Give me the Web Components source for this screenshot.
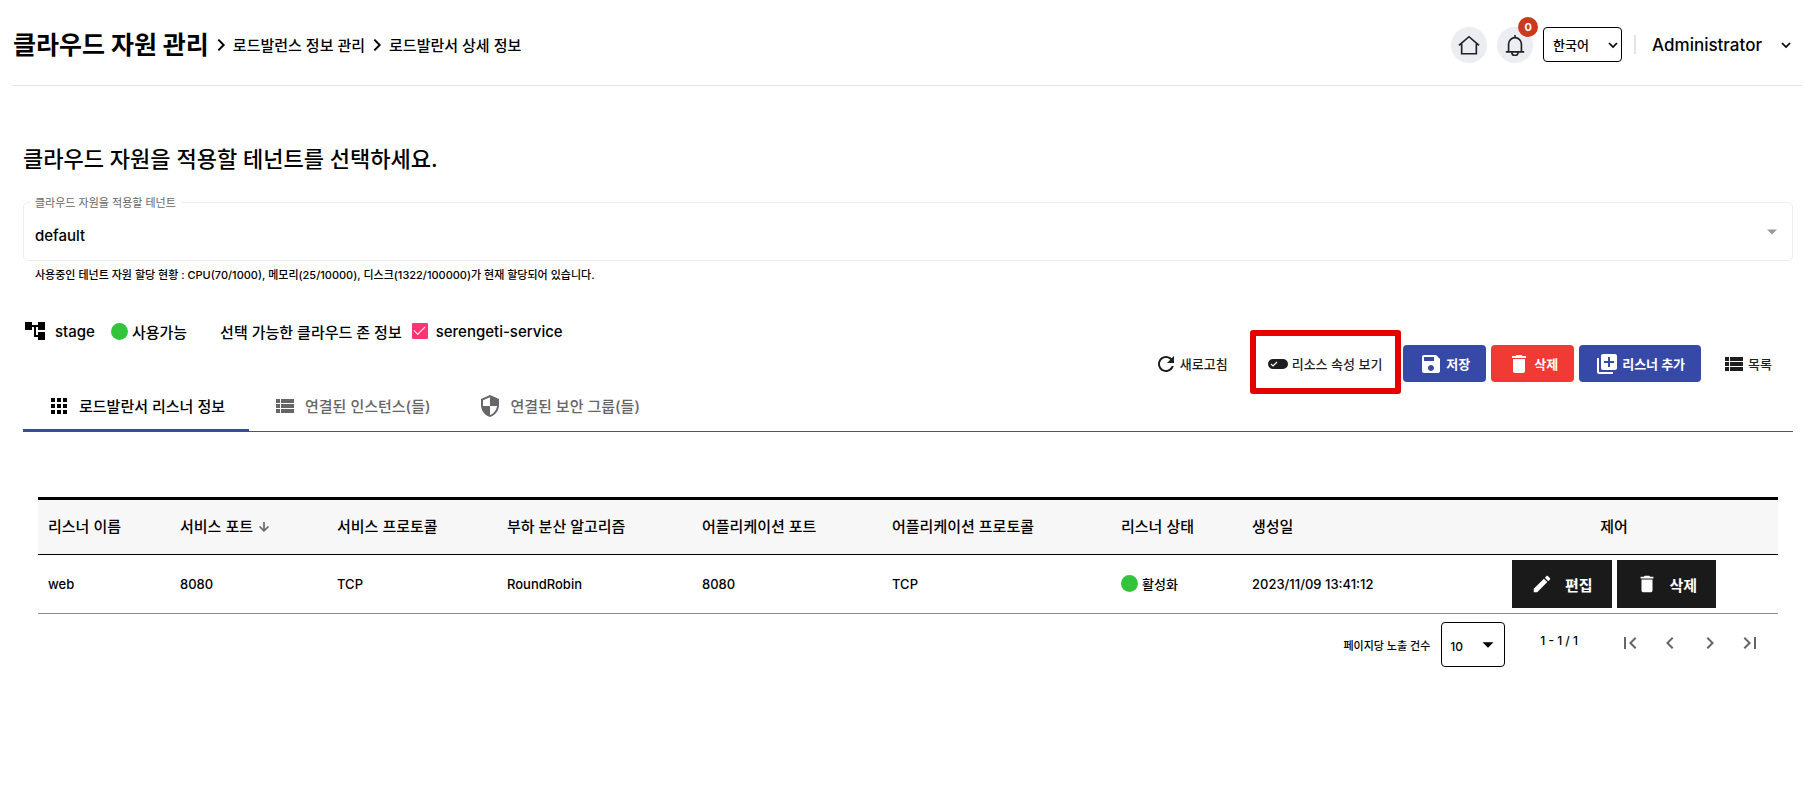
<!DOCTYPE html>
<html lang="ko">
<head>
<meta charset="utf-8">
<title>클라우드 자원 관리</title>
<style>
body {
    margin: 0;
    background: #fff;
    color: #000;
    font-family: Inter, "Noto Sans CJK KR", sans-serif;
    font-size: 15px;
    font-weight: 500;
}
</style>
</head>
<body>
<cloud-console></cloud-console>

<script>
const ICONS = {
    tree: '<path d="M22 11V3h-7v3H9V3H2v8h7V8h2v10h4v3h7v-8h-7v3h-2V8h2v3z"/>',
    refresh: '<path d="M17.65 6.35C16.2 4.9 14.21 4 12 4c-4.42 0-7.99 3.58-7.99 8s3.57 8 7.99 8c3.73 0 6.84-2.55 7.73-6h-2.08c-.82 2.33-3.04 4-5.65 4-3.31 0-6-2.69-6-6s2.69-6 6-6c1.66 0 3.14.69 4.22 1.78L13 11h7V4l-2.35 2.35z"/>',
    toggle: '<rect x="2" y="7" width="20" height="10" rx="5"/><path d="M5 12l2 2 4-4" fill="none" stroke="#fff" stroke-width="1.200"/>',
    save: '<path d="M17 3H5c-1.110 0-2 .9-2 2v14c0 1.100.89 2 2 2h14c1.100 0 2-.9 2-2V7l-4-4zm-5 16c-1.660 0-3-1.340-3-3s1.340-3 3-3 3 1.340 3 3-1.340 3-3 3zm3-10H5V5h10v4z"/>',
    trash: '<path d="M6 19c0 1.100.9 2 2 2h8c1.100 0 2-.9 2-2V7H6v12zM19 4h-3.500l-1-1h-5l-1 1H5v2h14V4z"/>',
    queue: '<path d="M4 6H2v14c0 1.100.9 2 2 2h14v-2H4V6zm16-4H8c-1.100 0-2 .9-2 2v12c0 1.100.9 2 2 2h12c1.100 0 2-.9 2-2V4c0-1.100-.9-2-2-2zm-1 9h-4v4h-2v-4H9V9h4V5h2v4h4v2z"/>',
    list: '<path d="M3 14h4v-4H3v4zm0 5h4v-4H3v4zM3 9h4V5H3v4zm5 5h13v-4H8v4zm0 5h13v-4H8v4zM8 5v4h13V5H8z"/>',
    apps: '<path d="M4 8h4V4H4v4zm6 12h4v-4h-4v4zm-6 0h4v-4H4v4zm0-6h4v-4H4v4zm6 0h4v-4h-4v4zm6-10v4h4V4h-4zm-6 4h4V4h-4v4zm6 6h4v-4h-4v4zm0 6h4v-4h-4v4z"/>',
    shield: '<path d="M12 1L3 5v6c0 5.550 3.840 10.740 9 12 5.160-1.260 9-6.450 9-12V5l-9-4zm0 10.990h7c-.53 4.120-3.280 7.790-7 8.940V12H5V6.300l7-3.110v8.800z"/>',
    edit: '<path d="M3 17.250V21h3.750L17.810 9.940l-3.750-3.750L3 17.250zM20.710 7.040c.39-.39.39-1.020 0-1.410l-2.340-2.340c-.39-.39-1.020-.39-1.410 0l-1.830 1.830 3.750 3.750 1.830-1.830z"/>',
    first: '<path d="M18.410 16.590L13.820 12l4.590-4.590L17 6l-6 6 6 6zM6 6h2v12H6z"/>',
    prev: '<path d="M15.410 7.410L14 6l-6 6 6 6 1.410-1.410L10.830 12z"/>',
    next: '<path d="M10 6L8.590 7.410 13.170 12l-4.580 4.590L10 18l6-6z"/>',
    last: '<path d="M5.590 7.410L10.180 12l-4.590 4.590L7 18l6-6-6-6zM16 6h2v12h-2z"/>',
    sort: '<path d="M20 12l-1.410-1.410L13 16.170V4h-2v12.170l-5.580-5.590L4 12l8 8 8-8z" stroke="currentColor"/>',
    caret: '<path d="M6 9h12l-6 6z"/>',
    crumb: '<path d="M8 4l8 8-8 8" fill="none" stroke="currentColor" stroke-width="3"/>',
    down: '<path d="M4 8l8 8 8-8" fill="none" stroke="currentColor" stroke-width="3.500"/>',
    home: '<path d="M1 12.500L12 3l11 9.500M4 10.500V21.500h16V10.500" fill="none" stroke="currentColor" stroke-width="1.800"/>',
    bell: '<path d="M12 1v3M2 19.500h20M5 19.500V11a7 7 0 0 1 14 0v8.500M8.500 20a3.500 3.500 0 0 0 7 0" fill="none" stroke="currentColor" stroke-width="1.800"/>'
};

// <ui-icon name="save" size="22">
class UiIcon extends HTMLElement {
    constructor() {
        super();
        this.attachShadow({mode: 'open'});
    }

    connectedCallback() {
        const size = this.getAttribute('size') || 24;
        this.shadowRoot.innerHTML = `
            <style>
            :host { display: inline-flex; flex: none; }
            svg { display: block; fill: currentColor; }
            </style>
            <svg width="${size}" height="${size}" viewBox="0 0 24 24" aria-hidden="true">${ICONS[this.getAttribute('name')]}</svg>
        `;
    }
}

// kind: text, primary, danger, dark
class UiButton extends HTMLElement {
    constructor() {
        super();
        this.attachShadow({mode: 'open'});
    }

    connectedCallback() {
        this.shadowRoot.innerHTML = `
            <style>
            :host { display: block; position: relative; }
            button {
                display: flex;
                align-items: center;
                gap: 3px;
                height: 37px;
                padding: 0 16px;
                border: 0;
                border-radius: 4px;
                background: transparent;
                color: #1e1e1e;
                font: inherit;
                font-size: 13px;
                cursor: pointer;
            }
            :host([kind="text"]) button { gap: 2px; padding-left: 10px; }
            :host([kind="primary"]) button { background: #3649a7; color: #fff; font-weight: 700; }
            :host([kind="danger"]) button { background: #f23a34; color: #fff; font-weight: 700; }
            :host([kind="dark"]) button {
                height: 48px;
                gap: 12px;
                padding: 0 19px;
                border-radius: 0;
                background: #1a1a1a;
                color: #fff;
                font-size: 15px;
                font-weight: 700;
            }
            /* marker frame drawn over the toolbar */
            :host([marked])::after {
                content: "";
                position: absolute;
                inset: -15px -3px -12px -6px;
                border: 6px solid #e60000;
                border-radius: 3px;
                pointer-events: none;
            }
            </style>
            <button type="button"><slot name="icon"></slot><slot></slot></button>
        `;
    }
}

class StatusDot extends HTMLElement {
    constructor() {
        super();
        this.attachShadow({mode: 'open'});
    }

    connectedCallback() {
        this.shadowRoot.innerHTML = `
            <style>
            :host { display: inline-flex; align-items: center; gap: 4px; }
            i { width: 17px; height: 17px; border-radius: 50%; background: #33c43c; }
            </style>
            <i></i><slot></slot>
        `;
    }
}

class ConsoleHeader extends HTMLElement {
    constructor() {
        super();
        this.attachShadow({mode: 'open'});
    }

    connectedCallback() {
        this.shadowRoot.innerHTML = `
            <style>
            :host {
                display: flex;
                align-items: center;
                justify-content: space-between;
                height: 81px;
                margin: 0 7px 0 13px;
                padding-top: 4px;
                border-bottom: 1px solid #e2e2e2;
            }
            nav, .tools { display: flex; align-items: center; }
            nav { gap: 4px; }
            h1 { margin: 0; font-size: 25px; font-weight: 700; line-height: 36px; }
            .tools { gap: 10px; }
            .round {
                position: relative;
                display: flex;
                align-items: center;
                justify-content: center;
                width: 36px;
                height: 36px;
                padding: 0;
                border: 0;
                border-radius: 50%;
                background: #ecedf2;
                color: #222;
                font: inherit;
            }
            .badge {
                position: absolute;
                top: -10px;
                right: -5px;
                width: 20px;
                border-radius: 50%;
                background: #cb3a1c;
                color: #fff;
                font-size: 11px;
                font-weight: 700;
                line-height: 20px;
                text-align: center;
            }
            .lang { position: relative; display: flex; align-items: center; }
            .lang ui-icon { position: absolute; right: 3px; pointer-events: none; }
            select {
                appearance: none;
                width: 79px;
                height: 35px;
                padding: 0 9px;
                border: 1px solid #000;
                border-radius: 4px;
                background: #fff;
                color: #000;
                font: inherit;
                font-size: 13px;
            }
            .bar { width: 2px; height: 19px; margin: 0 6px 0 2px; background: #e4e4e6; }
            .user {
                display: flex;
                align-items: center;
                gap: 18px;
                padding: 0 10px 0 0;
                border: 0;
                background: none;
                color: #000;
                font: inherit;
                font-size: 17px;
            }
            </style>
            <nav>
                <h1>클라우드 자원 관리</h1>
                <ui-icon name="crumb" size="16"></ui-icon>
                <span>로드발런스 정보 관리</span>
                <ui-icon name="crumb" size="16"></ui-icon>
                <span>로드발란서 상세 정보</span>
            </nav>
            <div class="tools">
                <button class="round" aria-label="홈"><ui-icon name="home" size="22"></ui-icon></button>
                <button class="round" aria-label="알림"><ui-icon name="bell" size="22"></ui-icon><span class="badge">0</span></button>
                <div class="lang">
                    <select aria-label="언어"><option>한국어</option></select>
                    <ui-icon name="down" size="12"></ui-icon>
                </div>
                <div class="bar"></div>
                <button class="user">Administrator <ui-icon name="down" size="12"></ui-icon></button>
            </div>
        `;
    }
}

class TenantPicker extends HTMLElement {
    constructor() {
        super();
        this.attachShadow({mode: 'open'});
    }

    connectedCallback() {
        this.shadowRoot.innerHTML = `
            <style>
            :host { display: block; }
            h2 { margin: 0 0 26px; font-size: 22px; font-weight: 500; line-height: 34px; }
            .field { position: relative; display: flex; align-items: center; }
            label {
                position: absolute;
                top: -7px;
                left: 7px;
                padding: 0 5px;
                background: #fff;
                color: #666;
                font-size: 11px;
                font-weight: 400;
                line-height: 16px;
            }
            select {
                appearance: none;
                width: 100%;
                height: 59px;
                padding: 7px 11px 0;
                border: 1px solid #eee;
                border-radius: 5px;
                background: #fff;
                color: #000;
                font: inherit;
            }
            ui-icon { position: absolute; right: 11px; color: #999; pointer-events: none; }
            p { margin: 6px 12px 0; font-size: 11px; line-height: 16px; }
            </style>
            <h2>클라우드 자원을 적용할 테넌트를 선택하세요.</h2>
            <div class="field">
                <select id="tenant"><option>default</option></select>
                <label for="tenant">클라우드 자원을 적용할 테넌트</label>
                <ui-icon name="caret" size="20"></ui-icon>
            </div>
            <p>사용중인 테넌트 자원 할당 현황 : CPU(70/1000), 메모리(25/10000), 디스크(1322/100000)가 현재 할당되어 있습니다.</p>
        `;
    }
}

class ZoneToolbar extends HTMLElement {
    constructor() {
        super();
        this.attachShadow({mode: 'open'});
    }

    connectedCallback() {
        this.shadowRoot.innerHTML = `
            <style>
            :host { display: flex; justify-content: space-between; align-items: flex-start; }
            .zone { display: flex; align-items: center; height: 22px; }
            .zone status-dot { margin: 0 33px 0 16px; }
            .zone ui-icon { margin-right: 8px; }
            label { display: flex; align-items: center; gap: 8px; margin-left: 10px; }
            input {
                appearance: none;
                width: 16px;
                height: 16px;
                margin: 0;
                border-radius: 1px;
                background: #ff3571;
            }
            input::before {
                content: "";
                display: block;
                width: 10px;
                height: 5px;
                margin: 3px 0 0 2px;
                border: solid #fff;
                border-width: 0 0 1px 1px;
                rotate: -45deg;
            }
            .actions { display: flex; gap: 5px; padding-top: 25px; }
            .actions .refresh { margin-right: 7px; }
            .actions .list { margin: 0 5px 0 6px; }
            </style>
            <div class="zone">
                <ui-icon name="tree"></ui-icon>stage
                <status-dot>사용가능</status-dot>
                <span>선택 가능한 클라우드 존 정보</span>
                <label><input type="checkbox" checked>serengeti-service</label>
            </div>
            <div class="actions">
                <ui-button kind="text" class="refresh"><ui-icon slot="icon" name="refresh"></ui-icon>새로고침</ui-button>
                <ui-button kind="text" marked><ui-icon slot="icon" name="toggle"></ui-icon>리소스 속성 보기</ui-button>
                <ui-button kind="primary"><ui-icon slot="icon" name="save"></ui-icon>저장</ui-button>
                <ui-button kind="danger"><ui-icon slot="icon" name="trash"></ui-icon>삭제</ui-button>
                <ui-button kind="primary"><ui-icon slot="icon" name="queue"></ui-icon>리스너 추가</ui-button>
                <ui-button kind="text" class="list"><ui-icon slot="icon" name="list"></ui-icon>목록</ui-button>
            </div>
        `;
    }
}

class ConsoleTabs extends HTMLElement {
    constructor() {
        super();
        this.attachShadow({mode: 'open'});
    }

    connectedCallback() {
        this.shadowRoot.innerHTML = `
            <style>
            :host { display: flex; border-bottom: 1px solid #555; }
            button {
                display: flex;
                align-items: center;
                gap: 8px;
                height: 50px;
                margin-bottom: -1px;
                padding: 0 24px;
                border: 0;
                border-bottom: 3px solid transparent;
                background: none;
                color: #666;
                font: inherit;
            }
            button[aria-selected="true"] { border-color: #3649a7; color: #000; }
            </style>
            <button role="tab" aria-selected="true"><ui-icon name="apps"></ui-icon>로드발란서 리스너 정보</button>
            <button role="tab" aria-selected="false"><ui-icon name="list"></ui-icon>연결된 인스턴스(들)</button>
            <button role="tab" aria-selected="false"><ui-icon name="shield"></ui-icon>연결된 보안 그룹(들)</button>
        `;
    }
}

class ListenerTable extends HTMLElement {
    constructor() {
        super();
        this.attachShadow({mode: 'open'});
    }

    connectedCallback() {
        this.shadowRoot.innerHTML = `
            <style>
            :host { display: block; }
            table {
                width: 100%;
                table-layout: fixed;
                border-collapse: separate;
                border-spacing: 0;
                border-top: 3px solid #000;
            }
            th, td { padding: 0 10px; text-align: left; white-space: nowrap; }
            th { height: 50px; padding-bottom: 4px; border-bottom: 1px solid #000; background: #f7f7f7; font-weight: 500; }
            td { height: 58px; border-bottom: 1px solid #888; font-size: 13px; }
            th:last-child { text-align: center; }
            th ui-icon { margin-left: 4px; color: #666; vertical-align: -2px; }
            .controls { display: flex; justify-content: center; gap: 5px; }
            .pager { display: flex; align-items: flex-start; justify-content: flex-end; padding: 8px 8px 0 0; font-size: 12px; }
            .pager label { margin-right: 11px; font-size: 11px; line-height: 48px; }
            .size { position: relative; display: flex; align-items: center; margin-right: 35px; }
            .size ui-icon { position: absolute; right: 6px; pointer-events: none; }
            select {
                appearance: none;
                width: 64px;
                height: 45px;
                padding: 4px 8px 0;
                border: 1px solid #000;
                border-radius: 4px;
                background: #fff;
                color: #000;
                font: inherit;
            }
            .range { margin-right: 32px; line-height: 38px; }
            .pager button { display: flex; padding: 9px 8px; border: 0; background: none; color: #666; }
            </style>
            <table>
                <colgroup>
                    <col style="width: 132px"><col style="width: 157px"><col style="width: 170px">
                    <col style="width: 195px"><col style="width: 190px"><col style="width: 229px">
                    <col style="width: 131px"><col style="width: 208px"><col>
                </colgroup>
                <thead>
                    <tr>
                        <th>리스너 이름</th>
                        <th>서비스 포트<ui-icon name="sort" size="14"></ui-icon></th>
                        <th>서비스 프로토콜</th>
                        <th>부하 분산 알고리즘</th>
                        <th>어플리케이션 포트</th>
                        <th>어플리케이션 프로토콜</th>
                        <th>리스너 상태</th>
                        <th>생성일</th>
                        <th>제어</th>
                    </tr>
                </thead>
                <tbody>
                    <tr>
                        <td>web</td>
                        <td>8080</td>
                        <td>TCP</td>
                        <td>RoundRobin</td>
                        <td>8080</td>
                        <td>TCP</td>
                        <td><status-dot>활성화</status-dot></td>
                        <td>2023/11/09 13:41:12</td>
                        <td>
                            <div class="controls">
                                <ui-button kind="dark"><ui-icon slot="icon" name="edit" size="22"></ui-icon>편집</ui-button>
                                <ui-button kind="dark"><ui-icon slot="icon" name="trash" size="22"></ui-icon>삭제</ui-button>
                            </div>
                        </td>
                    </tr>
                </tbody>
            </table>
            <div class="pager">
                <label for="rows">페이지당 노출 건수</label>
                <div class="size">
                    <select id="rows"><option>10</option></select>
                    <ui-icon name="caret" size="22"></ui-icon>
                </div>
                <span class="range">1 - 1 / 1</span>
                <button aria-label="처음"><ui-icon name="first"></ui-icon></button>
                <button aria-label="이전"><ui-icon name="prev"></ui-icon></button>
                <button aria-label="다음"><ui-icon name="next"></ui-icon></button>
                <button aria-label="마지막"><ui-icon name="last"></ui-icon></button>
            </div>
        `;
    }
}

class CloudConsole extends HTMLElement {
    constructor() {
        super();
        this.attachShadow({mode: 'open'});
    }

    connectedCallback() {
        this.shadowRoot.innerHTML = `
            <style>
            :host { display: block; }
            main { padding: 56px 16px 40px 23px; }
            zone-toolbar { margin-top: 37px; }
            listener-table { margin: 65px 15px 0; }
            </style>
            <console-header></console-header>
            <main>
                <tenant-picker></tenant-picker>
                <zone-toolbar></zone-toolbar>
                <console-tabs role="tablist"></console-tabs>
                <listener-table></listener-table>
            </main>
        `;
    }
}

customElements.define("ui-icon", UiIcon);
customElements.define("ui-button", UiButton);
customElements.define("status-dot", StatusDot);
customElements.define("console-header", ConsoleHeader);
customElements.define("tenant-picker", TenantPicker);
customElements.define("zone-toolbar", ZoneToolbar);
customElements.define("console-tabs", ConsoleTabs);
customElements.define("listener-table", ListenerTable);
customElements.define("cloud-console", CloudConsole);
</script>
</body>
</html>
